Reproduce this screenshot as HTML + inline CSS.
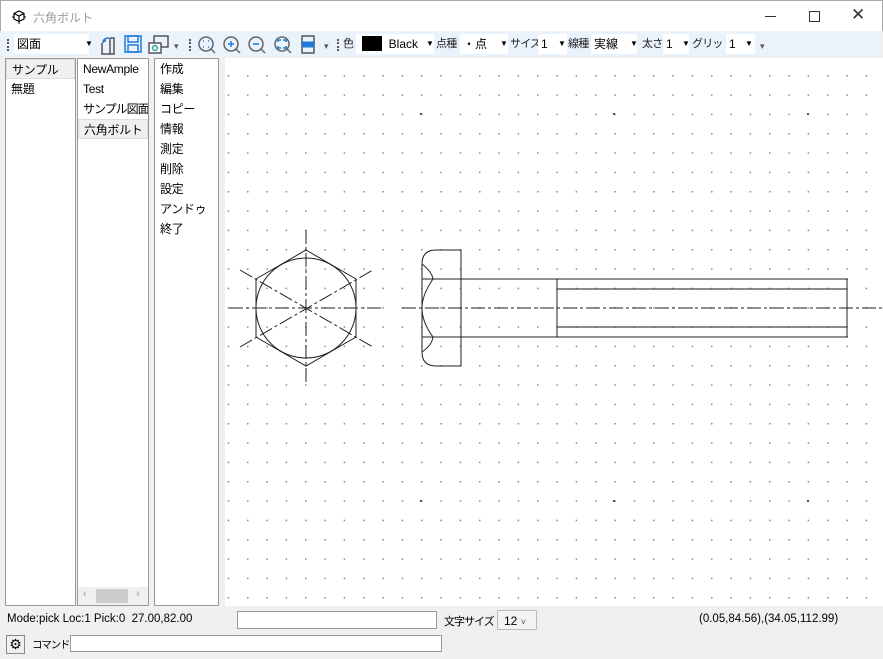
<!DOCTYPE html>
<html><head><meta charset="utf-8"><style>
*{box-sizing:border-box;margin:0;padding:0}
body{width:883px;height:659px;overflow:hidden;background:#f0f0f0;font-family:"Liberation Sans","Noto Sans CJK JP",sans-serif;font-size:12px;color:#000;position:relative;white-space:nowrap}
.abs{position:absolute}
#title{left:0;top:0;width:883px;height:31px;background:#fff;border:1px solid #aaa;border-bottom:none}
#tb{left:1px;top:31px;width:881px;height:26px;background:#eaf2fb}
.box{position:absolute;background:#fff;height:20px;top:3px;font-size:12px;line-height:20px;padding-left:3px}
.lb{position:absolute;top:3px;line-height:20px;font-size:11px;letter-spacing:-0.8px;color:#222}
.arr{position:absolute;font-size:8px;top:8px}
.lst{position:absolute;background:#fff;border:1px solid #999;top:58px;height:548px;overflow:hidden}
.it{height:20px;line-height:20px;padding-left:5px;font-size:12px;letter-spacing:-0.3px}
.sel{background:#f0f0f0;border:1px solid #ddd}
.grip{position:absolute;top:8px;width:2px;height:12px;border-left:2px dotted #555}
</style></head><body>
<div id="title" class="abs">
 <svg class="abs" style="left:10px;top:8px" width="16" height="16" viewBox="0 0 16 16"><path d="M8 2L13 4.5V10L8 12.5L3 10V4.5Z M3 4.5L8 7L13 4.5 M8 7V12.5" fill="none" stroke="#000" stroke-width="1.2"/><path d="M1 8h2M13 8h2M8 13v2" stroke="#000"/></svg>
 <div class="abs" style="left:32px;top:8px;color:#999;font-size:12px">六角ボルト</div>
 <div class="abs" style="left:764px;top:15px;width:11px;height:1px;background:#333"></div>
 <div class="abs" style="left:808px;top:10px;width:11px;height:11px;border:1px solid #333"></div>
 <div class="abs" style="left:850px;top:4px;font-size:17px;color:#333">✕</div>
</div>
<div id="tb" class="abs">
 <div class="grip" style="left:6px"></div>
 <div class="box" style="left:13px;width:75px">図面</div><div class="arr" style="left:84px">▼</div>
 <svg class="abs" style="left:97px;top:4px" width="20" height="20"><path d="M5 6h3M12 3v16H4V8" fill="none" stroke="#555" stroke-width="1.5"/><path d="M12 3h4v16h-4" fill="none" stroke="#555" stroke-width="1.5"/><path d="M5 8C5 4 8 3 11 3" fill="none" stroke="#1e7ad8" stroke-width="1.5"/></svg>
 <svg class="abs" style="left:123px;top:4px" width="18" height="18"><rect x="1" y="1" width="16" height="16" fill="none" stroke="#1e7ad8" stroke-width="1.5"/><rect x="4" y="1" width="10" height="6" fill="none" stroke="#1e7ad8" stroke-width="1.5"/><rect x="4" y="10" width="10" height="7" fill="none" stroke="#1e7ad8" stroke-width="1.5"/></svg>
 <svg class="abs" style="left:147px;top:4px" width="22" height="20"><rect x="6" y="1" width="14" height="11" fill="none" stroke="#555" stroke-width="1.5"/><rect x="1" y="8" width="12" height="10" fill="#fff" stroke="#555" stroke-width="1.5"/><circle cx="7" cy="13" r="2.5" fill="none" stroke="#2a9" stroke-width="1.4"/></svg>
 <div class="abs" style="left:173px;top:10px;font-size:9px;color:#555">▾</div>
 <div class="grip" style="left:188px"></div>
 <svg class="abs" style="left:196px;top:4px" width="120" height="20" fill="none" stroke-width="1.5">
  <circle cx="9" cy="9" r="7" stroke="#666"/><path d="M14 14l4 4" stroke="#666"/><path d="M6 6h1M11 6h1M6 12h1M11 12h1" stroke="#1e7ad8"/>
  <circle cx="34" cy="9" r="7" stroke="#666"/><path d="M39 14l4 4" stroke="#666"/><path d="M31 9h6M34 6v6" stroke="#1e7ad8"/>
  <circle cx="59" cy="9" r="7" stroke="#666"/><path d="M64 14l4 4" stroke="#666"/><path d="M56 9h6" stroke="#1e7ad8"/>
  <circle cx="85" cy="9" r="7" stroke="#666"/><path d="M90 14l4 4" stroke="#666"/><path d="M81 7V5h3M89 7V5h-3M81 11v2h3M89 11v2h-3" stroke="#1e7ad8"/>
  <rect x="105" y="1" width="12" height="17" stroke="#555"/><path d="M105 8h12M105 11h12" stroke="#1e7ad8" stroke-width="3"/>
 </svg>
 <div class="abs" style="left:323px;top:10px;font-size:9px;color:#555">▾</div>
 <div class="grip" style="left:336px"></div>
 <div class="lb" style="left:342px">色</div>
 <div class="box" style="left:355px;width:78px"><span style="display:inline-block;width:20px;height:15px;background:#000;vertical-align:-3px;margin-left:3px"></span>&nbsp;&nbsp;Black</div><div class="arr" style="left:425px">▼</div>
 <div class="lb" style="left:435px">点種</div>
 <div class="box" style="left:459px;width:48px">・点</div><div class="arr" style="left:499px">▼</div>
 <div class="lb" style="left:509px">サイズ</div>
 <div class="box" style="left:537px;width:29px">1</div><div class="arr" style="left:557px">▼</div>
 <div class="lb" style="left:567px">線種</div>
 <div class="box" style="left:590px;width:46px">実線</div><div class="arr" style="left:629px">▼</div>
 <div class="lb" style="left:641px">太さ</div>
 <div class="box" style="left:662px;width:26px">1</div><div class="arr" style="left:681px">▼</div>
 <div class="lb" style="left:691px">グリッド</div>
 <div class="box" style="left:725px;width:29px">1</div><div class="arr" style="left:744px">▼</div>
 <div class="abs" style="left:759px;top:10px;font-size:9px;color:#555">▾</div>
</div>

<div class="lst" style="left:5px;width:71px"><div class="it sel">サンプル</div><div class="it">無題</div></div>
<div class="lst" style="left:77px;width:72px"><div class="it">NewAmple</div><div class="it">Test</div><div class="it" style="letter-spacing:-1px">サンプル図面</div><div class="it sel">六角ボルト</div>
 <div class="abs" style="left:0;top:528px;width:70px;height:18px;background:#f0f0f0"><div class="abs" style="left:18px;top:2px;width:32px;height:14px;background:#cdcdcd"></div><span class="abs" style="left:5px;top:1px;color:#999;font-size:11px">‹</span><span class="abs" style="left:58px;top:1px;color:#999;font-size:11px">›</span></div></div>
<div class="lst" style="left:154px;width:65px"><div class="it">作成</div><div class="it">編集</div><div class="it">コピー</div><div class="it">情報</div><div class="it">測定</div><div class="it">削除</div><div class="it">設定</div><div class="it">アンドゥ</div><div class="it">終了</div></div>

<svg class="abs" style="left:225px;top:58px" width="658" height="548" viewBox="225 58 658 548">
 <defs><pattern id="g" patternUnits="userSpaceOnUse" x="247" y="75" width="19.333" height="19.333"><rect x="0" y="0" width="1.5" height="1.5" fill="#888"/></pattern></defs>
 <rect x="225" y="58" width="658" height="548" fill="#fff"/>
 <rect x="225" y="58" width="658" height="548" fill="url(#g)"/>
 <rect x="420" y="113" width="2" height="2" fill="#555"/><rect x="613" y="113" width="2" height="2" fill="#555"/><rect x="807" y="113" width="2" height="2" fill="#555"/>
 <rect x="420" y="500" width="2" height="2" fill="#555"/><rect x="613" y="500" width="2" height="2" fill="#555"/><rect x="807" y="500" width="2" height="2" fill="#555"/>
 <g fill="none" stroke="#222" stroke-width="1">
  <path d="M306 250L356 279V337L306 366L256 337V279Z"/>
  <circle cx="306" cy="308" r="50"/>
  <g stroke-dasharray="14 3 3 3">
   <path d="M229 308H383"/><path d="M306 230V385"/><path d="M240 270L373 347"/><path d="M240 347L373 270"/>
   <path d="M402 308H883"/>
  </g>
  <path d="M461 250H436Q422 250 422 264V352Q422 366 436 366H461Z"/>
  <path d="M422 264Q432 272 433 279Q422 295 422 308Q422 322 433 337Q432 345 422 352"/>
  <path d="M422 279H848M422 337H848M461 250V366"/>
  <path d="M557 279V337M847 279V337"/>
  <path d="M557 289H847M557 327H847" stroke="#444" stroke-width="1.3"/>
 </g>
</svg>

<div class="abs" style="left:7px;top:613px;font-size:11.5px">Mode:pick Loc:1 Pick:0&nbsp; 27.00,82.00</div>
<div class="abs" style="left:237px;top:611px;width:200px;height:18px;background:#fff;border:1px solid #999"></div>
<div class="abs" style="left:444px;top:613px;font-size:11px;letter-spacing:-1px">文字サイズ</div>
<div class="abs" style="left:497px;top:610px;width:40px;height:20px;border:1px solid #bbb;background:#f3f3f3;font-size:12px;padding:3px 0 0 6px">12 <span style="font-size:9px;color:#555">˅</span></div>
<div class="abs" style="left:699px;top:613px;font-size:11.5px">(0.05,84.56),(34.05,112.99)</div>
<div class="abs" style="left:6px;top:635px;width:19px;height:19px;border:1px solid #888;text-align:center;font-size:14px;line-height:17px">⚙</div>
<div class="abs" style="left:32px;top:637px;font-size:10.5px;letter-spacing:-1.2px">コマンド</div>
<div class="abs" style="left:70px;top:635px;width:372px;height:17px;background:#fff;border:1px solid #999"></div>
</body></html>
